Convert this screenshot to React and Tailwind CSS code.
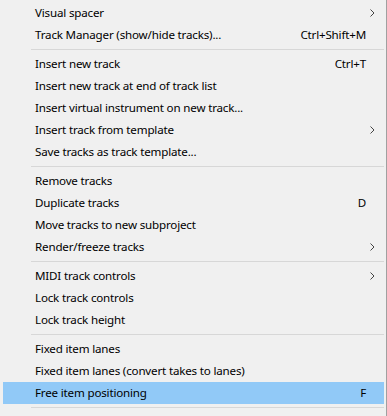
import React from "react";

const groups = [
  [
    { label: "Visual spacer", sub: true },
    { label: "Track Manager (show/hide tracks)...", key: "Ctrl+Shift+M" },
  ],
  [
    { label: "Insert new track", key: "Ctrl+T" },
    { label: "Insert new track at end of track list" },
    { label: "Insert virtual instrument on new track..." },
    { label: "Insert track from template", sub: true },
    { label: "Save tracks as track template..." },
  ],
  [
    { label: "Remove tracks" },
    { label: "Duplicate tracks", key: "D" },
    { label: "Move tracks to new subproject" },
    { label: "Render/freeze tracks", sub: true },
  ],
  [
    { label: "MIDI track controls", sub: true },
    { label: "Lock track controls" },
    { label: "Lock track height" },
  ],
  [
    { label: "Fixed item lanes" },
    { label: "Fixed item lanes (convert takes to lanes)" },
    { label: "Free item positioning", key: "F", active: true },
  ],
];

const Chevron = () => (
  <svg width="5" height="8" viewBox="0 0 5 8" className="absolute right-[9px] top-[7px]">
    <path d="M0.5 0.5 L4 4 L0.5 7.5" fill="none" stroke="#444" strokeWidth="1" />
  </svg>
);

const Item = ({ item }) => (
  <div
    className={`relative h-[22px] flex items-center pl-[32px] pr-[18px] ${
      item.active ? "bg-[#91c9f7]" : ""
    }`}
  >
    <span className="flex-1 whitespace-nowrap">{item.label}</span>
    {item.key && <span className="whitespace-nowrap">{item.key}</span>}
    {item.sub && <Chevron />}
  </div>
);

export default function App() {
  return (
    <div
      className="w-[387px] h-[416px] overflow-hidden bg-[#f0f0f0] text-[11.6px] tracking-[-0.18px] text-black pl-[3px] pr-[2px] border-r border-[#a0a0a0] pt-[2px]"
      style={{ fontFamily: '"Noto Sans", "Open Sans", sans-serif' }}
    >
      {groups.map((group, gi) => (
        <div key={gi}>
          {gi > 0 && (
            <div className="h-[7px] flex items-center pl-[28px]">
              <div className="h-px w-full bg-[#d7d7d7]" />
            </div>
          )}
          {group.map((item) => (
            <Item key={item.label} item={item} />
          ))}
        </div>
      ))}
      <div className="h-[7px] flex items-center pl-[28px]">
        <div className="h-px w-full bg-[#d7d7d7]" />
      </div>
    </div>
  );
}
